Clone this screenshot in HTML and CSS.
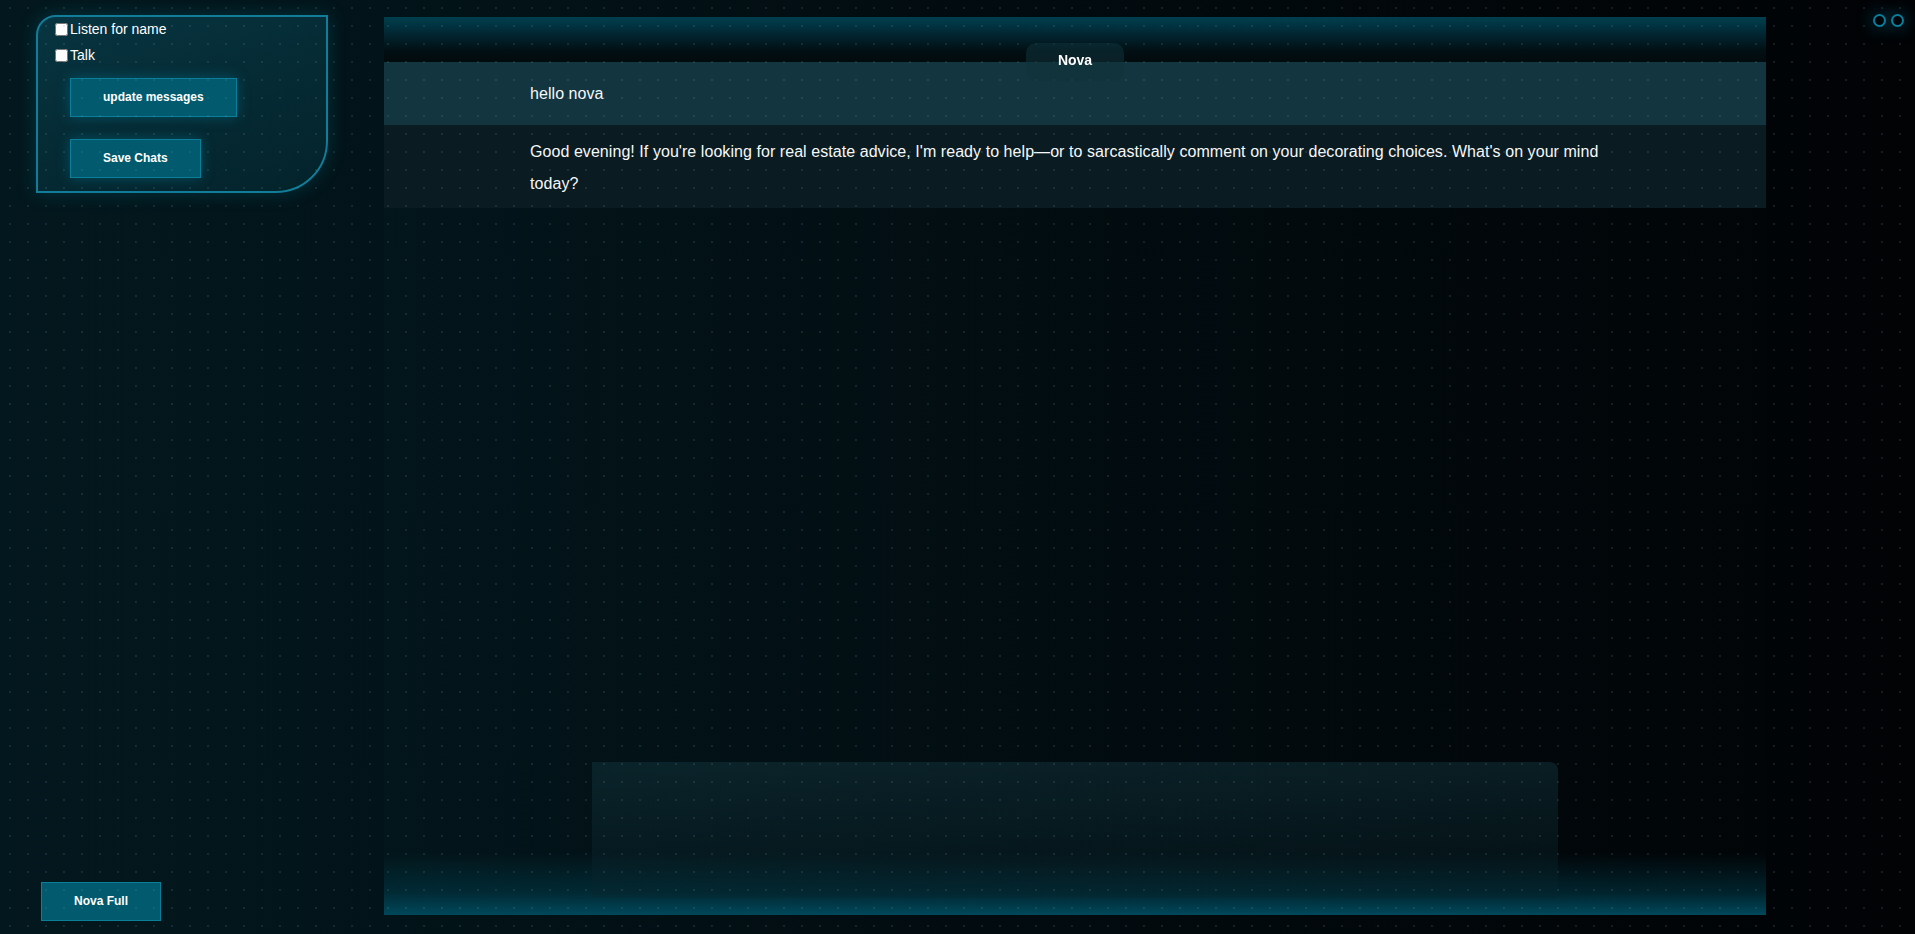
FILE: index.html
```html
<!DOCTYPE html>
<html lang="en">
<head>
<meta charset="utf-8">
<title>Nova</title>
<link rel="stylesheet" href="styles.css">
</head>
<body>
<div class="app">
  <aside class="sidebar">
    <div class="controls">
      <label class="check"><input type="checkbox">Listen for name</label>
      <label class="check second"><input type="checkbox">Talk</label>
      <button class="btn glow update">update messages</button>
      <button class="btn glow save">Save Chats</button>
    </div>
    <button class="btn full">Nova Full</button>
  </aside>
  <main class="chat">
    <div class="chat-head"></div>
    <div class="tab">Nova</div>
    <div class="msg user">hello nova</div>
    <div class="msg bot">Good evening! If you're looking for real estate advice, I'm ready to help—or to sarcastically comment on your decorating choices. What's on your mind today?</div>
    <div class="composer"></div>
  </main>
  <div class="status">
    <span class="ring"></span><span class="ring"></span>
  </div>
</div>
<div class="dots"></div>
</body>
</html>
```
FILE: styles.css
```css
html, body {
  margin: 0;
  height: 100%;
  overflow: hidden;
}
body {
  font-family: "Liberation Sans", Arial, sans-serif;
  color: #fff;
  background: linear-gradient(90deg, #03181e 0%, #021419 20%, #020c10 50%, #010609 80%, #010305 100%);
}
.app {
  display: flex;
  height: 934px;
}
.sidebar {
  width: 384px;
  flex: none;
  display: flex;
  flex-direction: column;
  align-items: flex-start;
}
.controls {
  box-sizing: border-box;
  width: 292px;
  margin: 15px 0 0 36px;
  padding: 2px 0 13px 17px;
  border: 2px solid #117d99;
  border-radius: 20px 0 52px 0;
  background: linear-gradient(160deg, #073541 0%, #052a33 55%, #04232b 100%);
  box-shadow: 0 0 18px rgba(0, 120, 150, 0.3);
  display: flex;
  flex-direction: column;
  align-items: flex-start;
}
.check {
  display: flex;
  align-items: center;
  gap: 2px;
  height: 20px;
  font-size: 14px;
  color: #fff;
}
.check.second {
  margin-top: 6px;
}
.check input {
  margin: 0;
  width: 13px;
  height: 13px;
}
.btn {
  box-sizing: border-box;
  height: 39px;
  padding: 0 32px;
  border: 1px solid #0b7f99;
  background: #015a6d;
  color: #fff;
  font-family: "Liberation Sans", Arial, sans-serif;
  font-weight: bold;
  font-size: 12px;
  line-height: 15px;
}
.glow {
  box-shadow: 0 0 12px rgba(0, 150, 185, 0.35);
}
.update {
  margin: 13px 0 0 15px;
}
.save {
  margin: 22px 0 0 15px;
}
.full {
  margin: auto 0 13px 41px;
}
.chat {
  width: 1382px;
  height: 898px;
  flex: none;
  margin-top: 17px;
  position: relative;
  display: flex;
  flex-direction: column;
  background:
    linear-gradient(to top, #00485b 0px, rgba(0, 60, 75, 0.55) 22px, rgba(0, 40, 50, 0) 62px),
    linear-gradient(90deg, rgba(3, 24, 30, 0.4), rgba(0, 6, 8, 0.4));
}
.chat-head {
  height: 45px;
  flex: none;
  background: linear-gradient(180deg, #003f4f 0%, #022530 40%, #020f13 75%, #020b0e 100%);
}
.tab {
  position: absolute;
  z-index: 1;
  top: 26px;
  left: calc(50% - 49px);
  width: 98px;
  height: 38px;
  box-sizing: border-box;
  padding-top: 9px;
  border-radius: 10px;
  background: rgba(16, 50, 58, 0.56);
  text-align: center;
  font-weight: bold;
  font-size: 14px;
  line-height: 16px;
  color: #fff;
}
.msg {
  flex: none;
  font-size: 16px;
  line-height: 32px;
  letter-spacing: 0.06px;
  color: #f6f8f9;
  padding-left: 146px;
  padding-right: 146px;
}
.user {
  padding-top: 15.5px;
  padding-bottom: 15.5px;
  background: #12353f;
}
.bot {
  padding-top: 11px;
  padding-bottom: 8px;
  background: #0a1b21;
}
.composer {
  flex: none;
  width: 966px;
  height: 136px;
  margin: auto auto 17px;
  border-radius: 0 8px 0 0;
  background: linear-gradient(180deg, rgba(18, 52, 60, 0.5) 0%, rgba(12, 42, 50, 0.38) 60%, rgba(8, 36, 44, 0.25) 100%);
}
.status {
  flex: 1;
  display: flex;
  justify-content: flex-end;
  align-items: flex-start;
  gap: 5px;
  padding: 14px 11px 0 0;
}
.ring {
  box-sizing: border-box;
  width: 13px;
  height: 13px;
  border: 2px solid #0a7f9d;
  border-radius: 50%;
  box-shadow: 0 0 14px 5px rgba(0, 110, 140, 0.22);
}
.dots {
  position: fixed;
  inset: 0;
  pointer-events: none;
  background-image: radial-gradient(circle at 10px 8px, rgba(120, 155, 165, 0.17) 1px, transparent 1.4px);
  background-size: 18px 18px;
}
```
